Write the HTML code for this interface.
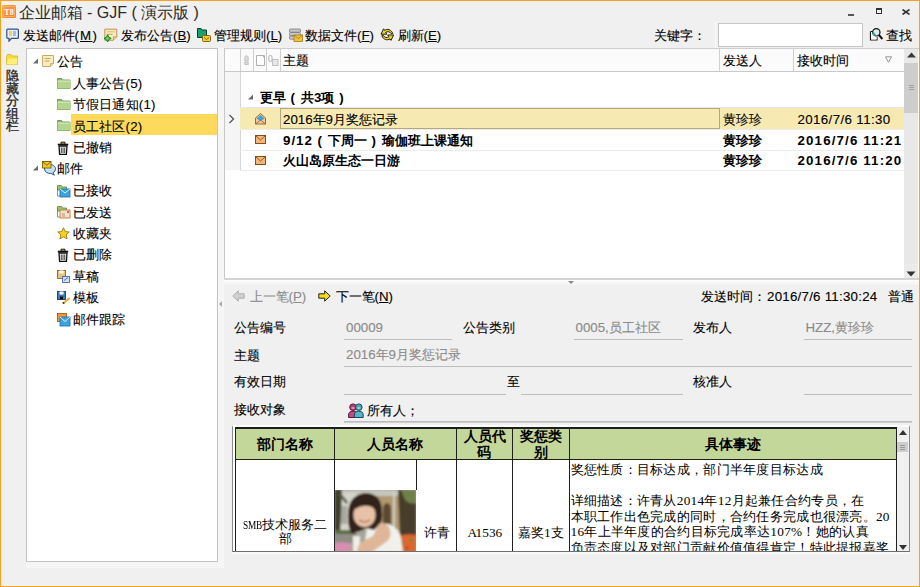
<!DOCTYPE html>
<html><head><meta charset="utf-8"><style>
*{box-sizing:border-box}
html,body{margin:0;padding:0;width:920px;height:587px;overflow:hidden;background:#f0f0f0;font-family:"Liberation Sans",sans-serif;color:#000}
.a{position:absolute;white-space:nowrap}
.t{position:absolute;white-space:nowrap;font-size:13.3px;line-height:16px;-webkit-text-stroke:.12px currentColor}
.u{text-decoration:underline;text-underline-offset:1px}
.b{font-weight:bold}
.sf{font-family:"Liberation Serif",serif}
</style></head><body>
<div class="a" style="left:0px;top:0px;width:920px;height:587px;border:1px solid #f4a31e"></div>
<svg class="a" style="left:2px;top:5px" width="14" height="13" viewBox="0 0 14 13"><defs><linearGradient id="og" x1="0" y1="0" x2="1" y2="1"><stop offset="0" stop-color="#ffa04a"/><stop offset="1" stop-color="#f5801e"/></linearGradient></defs><rect x="0" y="0" width="14" height="13" rx="1.5" fill="url(#og)"/><rect x="1.5" y="1.5" width="11" height="10" fill="none" stroke="#ffc080" stroke-width=".6"/><text x="7" y="10" font-size="8" font-family="Liberation Serif" font-weight="bold" fill="#fff" text-anchor="middle">T8</text></svg>
<div class="a" style="left:18.5px;top:3px;font-size:16px;line-height:19px;color:#2a2a2a">企业邮箱 - GJF ( 演示版 )</div>
<div class="a" style="left:848px;top:14px;width:6px;height:2px;background:#555"></div>
<div class="a" style="left:876px;top:8px;width:6px;height:6px;border:1px solid #333;border-top-width:2px"></div>
<svg class="a" style="left:902px;top:9px" width="8" height="6" viewBox="0 0 8 6"><path d="M0.5 0.5L7.5 5.5M7.5 0.5L0.5 5.5" stroke="#333" stroke-width="1.6"/></svg>
<svg class="a" style="left:5.5px;top:28px" width="14" height="14" viewBox="0 0 14 14"><path d="M1.8 1.2h9.6a1 1 0 0 1 1 1v7.2a1 1 0 0 1-1 1H5.5L3 13.2v-2.8H1.8a1 1 0 0 1-1-1V2.2a1 1 0 0 1 1-1z" fill="#e6eef8" stroke="#2f4f8a" stroke-width="1.2"/><rect x="3" y="3" width="3" height="5" fill="#e8d650"/><rect x="7" y="3" width="3" height="5" fill="#a9b9cf"/></svg>
<div class="t" style="left:22.5px;top:28px;">发送邮件<span style="letter-spacing:1px">(</span><span class="u" style="letter-spacing:1.5px">M</span>)</div>
<svg class="a" style="left:104px;top:28px" width="14" height="14" viewBox="0 0 14 14"><path d="M.8 1.2h12v7.6L9.3 12.3H.8z" fill="#fbeebc" stroke="#b8955a" stroke-width="1"/><path d="M9.3 12.3V8.8h3.5" fill="#e6cf98" stroke="#b8955a" stroke-width=".8"/><path d="M2.8 3.8h8" stroke="#f0b060" stroke-width="1"/><path d="M2.8 6.3h6" stroke="#a89878" stroke-width=".9"/><path d="M3.6 6.8l1.2 2.4 2.4 1.2-2.4 1.2-1.2 2.4-1.2-2.4-2.4-1.2 2.4-1.2z" fill="#5fd35f" stroke="#167a16" stroke-width="1"/></svg>
<div class="t" style="left:121px;top:28px;">发布公告(<span class="u">B</span>)</div>
<svg class="a" style="left:197px;top:28px" width="14" height="14" viewBox="0 0 14 14"><path d="M0.5 0.5h3.5l1 1.5h4.5v7.5h-9z" fill="#17a070" stroke="#0a3a2a" stroke-width="1"/><rect x="5.5" y="7.5" width="8" height="6" rx="1" fill="#f5d020" stroke="#7a5a10" stroke-width=".9"/><path d="M7 9.5l2.5 2 2.5-2" fill="none" stroke="#7a5a10" stroke-width=".9"/></svg>
<div class="t" style="left:214px;top:28px;">管理规则(<span class="u">L</span>)</div>
<svg class="a" style="left:289px;top:28px" width="14" height="14" viewBox="0 0 14 14"><rect x="0.5" y="1" width="11" height="3.2" rx="1" fill="#c8c8c8" stroke="#777" stroke-width=".8"/><rect x="0.5" y="4.5" width="11" height="3.2" rx="1" fill="#c8c8c8" stroke="#777" stroke-width=".8"/><rect x="0.5" y="8" width="11" height="3.2" rx="1" fill="#c8c8c8" stroke="#777" stroke-width=".8"/><rect x="5" y="7" width="8.5" height="6.5" fill="#f3c23a" stroke="#a27a16" stroke-width=".8"/><path d="M5 7l4.25 3.5 4.25-3.5" fill="none" stroke="#a27a16" stroke-width=".8"/></svg>
<div class="t" style="left:305px;top:28px;">数据文件(<span class="u">F</span>)</div>
<svg class="a" style="left:380px;top:27px" width="15" height="15" viewBox="0 0 15 15"><path d="M12.8 6.6C11.3 2.4 7.2 1.4 4.6 3.4L3.6 1.8 1 7.2h5.8L5.7 5.4C7.7 4.1 10.1 4.6 11.1 6.6z" fill="#f7d40a" stroke="#1e1e1e" stroke-width="1"/><path d="M1.8 8.6C3.3 12.8 7.4 13.8 10 11.8l1 1.6 2.6-5.4H7.8l1.1 1.8C6.9 11.1 4.5 10.6 3.5 8.6z" fill="#f7d40a" stroke="#1e1e1e" stroke-width="1"/></svg>
<div class="t" style="left:397.5px;top:28px;">刷新(<span class="u">E</span>)</div>
<div class="t" style="left:653.5px;top:28px;">关键字：</div>
<div class="a" style="left:715px;top:22px;width:1px;height:26px;background:#fafafa"></div>
<div class="a" style="left:718px;top:23px;width:145px;height:24px;background:#fff;border:1px solid #c6c6c6"></div>
<svg class="a" style="left:869px;top:27px" width="15" height="14" viewBox="0 0 15 14"><path d="M1.5 4.5h3v0M1.5 4.5v8.5h6.5v-3" fill="#fff" stroke="#1a1a1a" stroke-width="1.2"/><rect x="2.1" y="5.1" width="5.5" height="7.3" fill="#fff"/><circle cx="7.3" cy="5.3" r="3.7" fill="#dfeeed" stroke="#111" stroke-width="1.2"/><path d="M4.3 5.3a3 3 0 0 0 2.5 3" fill="none" stroke="#2fa79c" stroke-width="2"/><path d="M9.9 8l3.5 4" stroke="#111" stroke-width="1.9"/></svg>
<div class="t" style="left:886px;top:28px;">查找</div>
<svg class="a" style="left:6px;top:54px" width="12" height="11" viewBox="0 0 12 11"><path d="M0.5 2.5l1-2h3.5l1 1.5h5.5v8.5h-11z" fill="#f7dc3a" stroke="#d8b51a" stroke-width=".8"/><path d="M0.5 10.5l1.5-6h9.5l-0.5 6z" fill="#fff07a"/></svg>
<div class="a" style="left:5.5px;top:70px;font-size:13px;line-height:12.6px;width:14px;white-space:normal;color:#222;-webkit-text-stroke:.3px #222">隐藏分组栏</div>
<div class="a" style="left:26px;top:48px;width:192px;height:514px;background:#fff;border:1px solid #c3c3c3"></div>
<div class="a" style="left:71px;top:114px;width:146px;height:21px;background:#fdd95c"></div>
<svg class="a" style="left:33px;top:58px" width="5" height="6" viewBox="0 0 5 6"><path d="M5 0.5v5h-5z" fill="#6a6a6a"/></svg>
<svg class="a" style="left:42px;top:55px" width="12" height="12" viewBox="0 0 12 12"><path d="M0.5 0.5h11v8l-3 3h-8z" fill="#f8ecc0" stroke="#c7aa6a" stroke-width="1"/><path d="M2.5 3.5h6M2.5 6h5" stroke="#c9a860" stroke-width="1"/><path d="M8.5 11.5v-3h3" fill="#eedc9c" stroke="#c7aa6a" stroke-width=".8"/></svg>
<div class="t" style="left:57.3px;top:54px;">公告</div>
<svg class="a" style="left:57px;top:77px" width="14" height="12" viewBox="0 0 14 12"><path d="M0.5 1.5h4l1 1.5h7.5v8.5H0.5z" fill="#8fb86a" stroke="#5d8a3e" stroke-width=".8"/><path d="M0.5 4h13v7.5H0.5z" fill="#b5d48e"/><path d="M0.5 4h13" stroke="#e6f2d6" stroke-width="1"/></svg>
<div class="t" style="left:72.8px;top:76px;letter-spacing:.2px">人事公告(5)</div>
<svg class="a" style="left:57px;top:98px" width="14" height="12" viewBox="0 0 14 12"><path d="M0.5 1.5h4l1 1.5h7.5v8.5H0.5z" fill="#8fb86a" stroke="#5d8a3e" stroke-width=".8"/><path d="M0.5 4h13v7.5H0.5z" fill="#b5d48e"/><path d="M0.5 4h13" stroke="#e6f2d6" stroke-width="1"/></svg>
<div class="t" style="left:72.8px;top:97px;letter-spacing:.2px">节假日通知(1)</div>
<svg class="a" style="left:57px;top:119px" width="14" height="12" viewBox="0 0 14 12"><path d="M0.5 1.5h4l1 1.5h7.5v8.5H0.5z" fill="#8fb86a" stroke="#5d8a3e" stroke-width=".8"/><path d="M0.5 4h13v7.5H0.5z" fill="#b5d48e"/><path d="M0.5 4h13" stroke="#e6f2d6" stroke-width="1"/></svg>
<div class="t" style="left:72.8px;top:118.5px;letter-spacing:.2px">员工社区(2)</div>
<svg class="a" style="left:57px;top:141px" width="12" height="14" viewBox="0 0 12 14"><path d="M4 3.2V1.2h4v2" fill="#c9a040" stroke="#222" stroke-width="1"/><path d="M.8 3.6h10.4" stroke="#111" stroke-width="1.8"/><path d="M2 5h8l-.6 8.3H2.6z" fill="#f4f4f4" stroke="#111" stroke-width="1.3"/><path d="M4.3 6.5v5.5M6 6.5v5.5M7.7 6.5v5.5" stroke="#333" stroke-width=".9"/></svg>
<div class="t" style="left:72.8px;top:140px;letter-spacing:.2px">已撤销</div>
<svg class="a" style="left:33px;top:165px" width="5" height="6" viewBox="0 0 5 6"><path d="M5 0.5v5h-5z" fill="#6a6a6a"/></svg>
<svg class="a" style="left:42px;top:161px" width="14" height="15" viewBox="0 0 14 15"><path d="M2.5 8a5.5 4.5 0 1 1 8.5 3.7l1.3 2.5-3.4-1.8A5.5 4.5 0 0 1 2.5 8z" fill="#c2e0f2" stroke="#2a5a7a" stroke-width="1"/><rect x=".5" y=".5" width="8.5" height="6.5" fill="#f2c81a" stroke="#7a5a10" stroke-width=".9"/><path d="M.8 .8l4 3.5 4-3.5" fill="none" stroke="#7a5a10" stroke-width=".9"/></svg>
<div class="t" style="left:57.3px;top:161px;">邮件</div>
<svg class="a" style="left:57px;top:184px" width="14" height="14" viewBox="0 0 14 14"><path d="M0.5 1.5h4l1 1.5h4v3H0.5z" fill="#9cc46f" stroke="#5d8a3e" stroke-width=".8"/><path d="M0.5 3v9h3" fill="none" stroke="#5d8a3e" stroke-width=".8"/><rect x="3" y="5" width="10" height="8" fill="#3ba3e0" stroke="#1a6aa8" stroke-width=".8"/><path d="M3 5l5 4 5-4" fill="none" stroke="#dff1fb" stroke-width="1"/></svg>
<div class="t" style="left:72.8px;top:183px;letter-spacing:.2px">已接收</div>
<svg class="a" style="left:57px;top:205px" width="14" height="14" viewBox="0 0 14 14"><path d="M0.5 1.5h4l1 1.5h4v3H0.5z" fill="#9cc46f" stroke="#5d8a3e" stroke-width=".8"/><path d="M0.5 3v9h3" fill="none" stroke="#5d8a3e" stroke-width=".8"/><rect x="3" y="5" width="10" height="8" fill="#f3e2cf" stroke="#c0773a" stroke-width=".9"/><path d="M5 9h3M5 11h3" stroke="#c0773a" stroke-width=".8"/><circle cx="11" cy="7" r="1" fill="#e03050"/></svg>
<div class="t" style="left:72.8px;top:204.5px;letter-spacing:.2px">已发送</div>
<svg class="a" style="left:57px;top:227px" width="13" height="13" viewBox="0 0 13 13"><path d="M6.5 0.8l1.7 3.8 4.1.4-3.1 2.8.9 4.1-3.6-2.1-3.6 2.1.9-4.1L.7 5l4.1-.4z" fill="#f7d21e" stroke="#9a7a10" stroke-width=".9"/></svg>
<div class="t" style="left:72.8px;top:226px;letter-spacing:.2px">收藏夹</div>
<svg class="a" style="left:57px;top:248px" width="12" height="14" viewBox="0 0 12 14"><path d="M4 3.2V1.2h4v2" fill="#c9a040" stroke="#222" stroke-width="1"/><path d="M.8 3.6h10.4" stroke="#111" stroke-width="1.8"/><path d="M2 5h8l-.6 8.3H2.6z" fill="#f4f4f4" stroke="#111" stroke-width="1.3"/><path d="M4.3 6.5v5.5M6 6.5v5.5M7.7 6.5v5.5" stroke="#333" stroke-width=".9"/></svg>
<div class="t" style="left:72.8px;top:247px;letter-spacing:.2px">已删除</div>
<svg class="a" style="left:57px;top:270px" width="13" height="13" viewBox="0 0 13 13"><rect x="0.5" y="0.5" width="8" height="8" fill="#e8c477" stroke="#8a6a2a" stroke-width=".9"/><rect x="2.5" y="0.5" width="4" height="3" fill="#fff"/><rect x="5.5" y="6.5" width="7" height="6" fill="#cfe0f5" stroke="#4a6ab0" stroke-width=".9"/><path d="M7 10.5l4-3" stroke="#4a6ab0" stroke-width=".9"/></svg>
<div class="t" style="left:72.8px;top:269px;letter-spacing:.2px">草稿</div>
<svg class="a" style="left:57px;top:291px" width="13" height="13" viewBox="0 0 13 13"><rect x="0.5" y="0.5" width="8" height="8" fill="#3a78c0" stroke="#1a3a70" stroke-width=".9"/><rect x="2.5" y="0.5" width="4" height="3" fill="#fff"/><rect x="3" y="5.5" width="3" height="3" fill="#111"/><path d="M6 12.5l6.5-5.5" stroke="#e0b030" stroke-width="2"/><path d="M6 12.5l1-1" stroke="#333" stroke-width="2"/></svg>
<div class="t" style="left:72.8px;top:290px;letter-spacing:.2px">模板</div>
<svg class="a" style="left:57px;top:313px" width="14" height="14" viewBox="0 0 14 14"><rect x="0.5" y="0.5" width="9" height="8" fill="#f09a3a" stroke="#a8581a" stroke-width=".9"/><rect x="3" y="4" width="10" height="9" fill="#3ba3e0" stroke="#1a6aa8" stroke-width=".8"/><path d="M3 4l5 4.5 5-4.5" fill="none" stroke="#dff1fb" stroke-width="1"/></svg>
<div class="t" style="left:72.8px;top:312px;letter-spacing:.2px">邮件跟踪</div>
<div class="a" style="left:218px;top:48px;width:6px;height:520px;background:#f6f6f6"></div>
<div class="a" style="left:26px;top:562px;width:192px;height:6px;background:#f5f5f5"></div>
<div class="a" style="left:224px;top:48px;width:695px;height:231px;background:#fff;border-left:1px solid #c8c8c8;border-top:1px solid #cfcfcf"></div>
<div class="a" style="left:224px;top:278px;width:695px;height:2px;background:#d4d4d4"></div>
<div class="a" style="left:225px;top:49px;width:679px;height:23px;background:#fbfbfb;border-bottom:1px solid #c8c8c8"></div>
<div class="a" style="left:240px;top:49px;width:1px;height:22px;background:#d0d0d0"></div>
<div class="a" style="left:253px;top:49px;width:1px;height:22px;background:#d0d0d0"></div>
<div class="a" style="left:266px;top:49px;width:1px;height:22px;background:#d0d0d0"></div>
<div class="a" style="left:280px;top:49px;width:1px;height:22px;background:#d0d0d0"></div>
<div class="a" style="left:719px;top:49px;width:1px;height:22px;background:#d0d0d0"></div>
<div class="a" style="left:793px;top:49px;width:1px;height:22px;background:#d0d0d0"></div>
<div class="a" style="left:225px;top:72px;width:16px;height:98px;background:#f5f5f5;border-right:1px solid #d6d6d6"></div>
<svg class="a" style="left:244px;top:55px" width="5" height="10" viewBox="0 0 5 10"><path d="M.8 2.5a1.7 1.7 0 0 1 3.4 0v3.5h-3.4z" fill="#ddd" stroke="#b8b8b8" stroke-width=".8"/><rect x=".8" y="7.2" width="3.4" height="2.3" fill="#ddd" stroke="#b8b8b8" stroke-width=".8"/></svg>
<svg class="a" style="left:256px;top:55px" width="10" height="11" viewBox="0 0 10 11"><path d="M.5 .5h8v10h-8z" fill="#fff" stroke="#b0b0b0"/><path d="M7 1.5h1v1" stroke="#999" stroke-width=".8" fill="none"/></svg>
<svg class="a" style="left:268px;top:55px" width="11" height="11" viewBox="0 0 11 11"><path d="M.8 4V2a1.6 1.6 0 0 1 3.2 0v3a1.6 1.6 0 0 1-3.2 0z" fill="none" stroke="#aaa" stroke-width=".9"/><rect x="4.5" y="4.5" width="5.5" height="6" fill="#e8e8e8" stroke="#bbb" stroke-width=".9"/></svg>
<div class="t" style="left:283px;top:53px;">主题</div>
<div class="t" style="left:723px;top:53px;">发送人</div>
<div class="t" style="left:797px;top:53px;">接收时间</div>
<svg class="a" style="left:885px;top:56px" width="7" height="7" viewBox="0 0 7 7"><path d="M.5 .8h6l-3 5.5z" fill="none" stroke="#8a8a8a" stroke-width=".9"/></svg>
<div class="a" style="left:904px;top:49px;width:14px;height:229px;background:#e8e8e8"></div>
<div class="a" style="left:904px;top:264px;width:14px;height:14px;background:#ebebeb"></div>
<svg class="a" style="left:907px;top:52px" width="9" height="6" viewBox="0 0 9 6"><path d="M0 5.5l4.5-5 4.5 5z" fill="#3a3a3a"/></svg>
<div class="a" style="left:904px;top:63px;width:14px;height:50px;background:#cdcdcd"></div>
<div class="a" style="left:909px;top:85px;width:5px;height:1px;background:#a0a0a0"></div>
<div class="a" style="left:909px;top:87px;width:5px;height:1px;background:#a0a0a0"></div>
<div class="a" style="left:909px;top:89px;width:5px;height:1px;background:#a0a0a0"></div>
<svg class="a" style="left:906px;top:271px" width="10" height="6" viewBox="0 0 10 6"><path d="M0.5 0.5h9l-4.5 5z" fill="#333"/></svg>
<svg class="a" style="left:248px;top:94px" width="5" height="6" viewBox="0 0 5 6"><path d="M5 0.5v5h-5z" fill="#6a6a6a"/></svg>
<div class="t" style="left:259.5px;top:90px;font-weight:bold;-webkit-text-stroke:0">更早<span style="letter-spacing:1.2px"> ( </span>共3项<span style="letter-spacing:1.2px"> )</span></div>
<div class="a" style="left:240px;top:107px;width:664px;height:1px;background:#e6e6f0"></div>
<div class="a" style="left:240px;top:108px;width:664px;height:21px;background:#f7e9b2"></div>
<div class="a" style="left:280px;top:108px;width:440px;height:21px;border:1px solid #b3a77c"></div>
<div class="a" style="left:240px;top:129px;width:664px;height:1px;background:#ececec"></div>
<div class="a" style="left:240px;top:150px;width:664px;height:1px;background:#ececec"></div>
<div class="a" style="left:240px;top:170px;width:664px;height:1px;background:#ececec"></div>
<svg class="a" style="left:228px;top:114px" width="7" height="10" viewBox="0 0 7 10"><path d="M1.5 1l4 4-4 4" fill="none" stroke="#555" stroke-width="1.3"/></svg>
<svg class="a" style="left:255px;top:113px" width="11" height="12" viewBox="0 0 11 12"><path d="M.5 5l5-4.5 5 4.5v6h-10z" fill="#f3c89a" stroke="#9a5a2a" stroke-width=".9"/><path d="M1.5 5.5l4-3.5 4 3.5-4 2.5z" fill="#3aa6d8"/><path d="M.5 11l5-4 5 4" fill="none" stroke="#9a5a2a" stroke-width=".8"/></svg>
<svg class="a" style="left:255px;top:135px" width="11" height="9" viewBox="0 0 11 9"><rect x=".5" y=".5" width="10" height="8" fill="#f2b878" stroke="#8a4a1a" stroke-width="1"/><path d="M.8 .8l4.7 4.2 4.7-4.2" fill="none" stroke="#8a4a1a" stroke-width=".9"/></svg>
<svg class="a" style="left:255px;top:156px" width="11" height="9" viewBox="0 0 11 9"><rect x=".5" y=".5" width="10" height="8" fill="#f2b878" stroke="#8a4a1a" stroke-width="1"/><path d="M.8 .8l4.7 4.2 4.7-4.2" fill="none" stroke="#8a4a1a" stroke-width=".9"/></svg>
<div class="t" style="left:283px;top:111.5px;">2016年9月奖惩记录</div>
<div class="t" style="left:723px;top:111.5px;">黄珍珍</div>
<div class="t" style="left:797.5px;top:111.5px;letter-spacing:.38px">2016/7/6 11:30</div>
<div class="t" style="left:283px;top:132.5px;font-weight:bold;-webkit-text-stroke:0"><span style="letter-spacing:1px">9/12 ( </span>下周一<span style="letter-spacing:1px"> ) </span>瑜伽班上课通知</div>
<div class="t" style="left:723px;top:132.5px;font-weight:bold;-webkit-text-stroke:0">黄珍珍</div>
<div class="t" style="left:797.5px;top:132.5px;font-weight:bold;letter-spacing:1.15px;-webkit-text-stroke:0">2016/7/6 11:21</div>
<div class="t" style="left:283px;top:153px;font-weight:bold;-webkit-text-stroke:0">火山岛原生态一日游</div>
<div class="t" style="left:723px;top:153px;font-weight:bold;-webkit-text-stroke:0">黄珍珍</div>
<div class="t" style="left:797.5px;top:153px;font-weight:bold;letter-spacing:1.15px;-webkit-text-stroke:0">2016/7/6 11:20</div>
<div class="a" style="left:224px;top:280px;width:695px;height:5px;background:linear-gradient(#fdfdfd,#f3f3f3)"></div>
<svg class="a" style="left:568px;top:281px" width="6" height="3" viewBox="0 0 6 3"><path d="M0 0h6l-3 3z" fill="#888"/></svg>
<svg class="a" style="left:219px;top:301px" width="3" height="6" viewBox="0 0 3 6"><path d="M3 0v6l-3-3z" fill="#aaa"/></svg>
<svg class="a" style="left:232px;top:290px" width="13" height="12" viewBox="0 0 13 12"><path d="M.8 6l5.5-5.2v3h5.9v4.4H6.3v3z" fill="#cfcfcf" stroke="#a8a8a8" stroke-width=".9"/></svg>
<div class="t" style="left:249.5px;top:289px;color:#8c8c8c">上一笔(<span class="u">P</span>)</div>
<svg class="a" style="left:318px;top:290px" width="13" height="12" viewBox="0 0 13 12"><path d="M12.2 6L6.7.8v3H.8v4.4h5.9v3z" fill="#f5dc10" stroke="#222" stroke-width="1"/></svg>
<div class="t" style="left:335.5px;top:289px;">下一笔(<span class="u">N</span>)</div>
<div class="t" style="left:701px;top:289px;">发送时间：</div>
<div class="t" style="left:767px;top:289px;letter-spacing:.25px">2016/7/6 11:30:24</div>
<div class="t" style="left:888px;top:289px;">普通</div>
<div class="t" style="left:233.5px;top:320px;">公告编号</div>
<div class="a" style="left:344px;top:339px;width:108px;height:1px;background:#bdbdbd"></div>
<div class="t" style="left:346px;top:320px;color:#8a8a8a">00009</div>
<div class="t" style="left:462.5px;top:320px;">公告类别</div>
<div class="a" style="left:573.5px;top:339px;width:109.0px;height:1px;background:#bdbdbd"></div>
<div class="t" style="left:575.5px;top:320px;color:#8a8a8a">0005,员工社区</div>
<div class="t" style="left:693px;top:320px;">发布人</div>
<div class="a" style="left:804px;top:339px;width:108px;height:1px;background:#bdbdbd"></div>
<div class="t" style="left:805.5px;top:320px;color:#8a8a8a">HZZ,黄珍珍</div>
<div class="t" style="left:233.5px;top:347.5px;">主题</div>
<div class="a" style="left:344px;top:366px;width:568px;height:1px;background:#bdbdbd"></div>
<div class="t" style="left:346px;top:347px;color:#8a8a8a">2016年9月奖惩记录</div>
<div class="t" style="left:233.5px;top:374px;">有效日期</div>
<div class="a" style="left:344px;top:394px;width:162px;height:1px;background:#bdbdbd"></div>
<div class="t" style="left:507px;top:374px;">至</div>
<div class="a" style="left:520.5px;top:394px;width:162.0px;height:1px;background:#bdbdbd"></div>
<div class="t" style="left:693px;top:374px;">核准人</div>
<div class="a" style="left:804px;top:394px;width:108px;height:1px;background:#bdbdbd"></div>
<div class="t" style="left:233.5px;top:401.5px;">接收对象</div>
<div class="a" style="left:344px;top:421px;width:568px;height:1px;background:#bdbdbd"></div>
<div class="a" style="left:344px;top:422px;width:568px;height:1px;background:#cfcfcf"></div>
<svg class="a" style="left:348px;top:403px" width="16" height="16" viewBox="0 0 16 16"><circle cx="5" cy="4.2" r="3.3" fill="#b8407a" stroke="#5a1a3a" stroke-width="1"/><path d="M.6 14.5v-2.5a4.4 3.8 0 0 1 8.8 0v2.5z" fill="#c24a86" stroke="#5a1a3a" stroke-width="1"/><circle cx="10.8" cy="4.2" r="3.3" fill="#4aa8b8" stroke="#1a4a5a" stroke-width="1"/><path d="M6.4 14.5v-2.5a4.4 3.8 0 0 1 8.8 0v2.5z" fill="#56b4c4" stroke="#1a4a5a" stroke-width="1"/><path d="M3.5 5h3M9.3 5h3" stroke="#f0e0e8" stroke-width="1"/></svg>
<div class="t" style="left:367px;top:403px;">所有人；</div>
<div class="a" style="left:232px;top:425px;width:678px;height:127px;background:#fff;border:1px solid #8a8a8a;border-bottom-color:#6e6e6e;border-top:2px solid #fcfcfc"></div>
<div class="a" style="left:232px;top:552px;width:678px;height:2px;background:#f9f9f9"></div>
<div class="a" style="left:234px;top:427px;width:663px;height:124px;overflow:hidden">
<div class="a" style="left:1px;top:1px;width:662px;height:32px;background:#c4d79b"></div>
<div class="a" style="left:1px;top:33px;width:662px;height:100px;background:#fff"></div>
<svg class="a" style="left:101px;top:63px" width="81" height="62" viewBox="0 0 81 62"><defs><filter id="bl" x="0" y="0" width="81" height="62" filterUnits="userSpaceOnUse"><feGaussianBlur stdDeviation="0.8"/></filter></defs><rect width="81" height="62" fill="#a8a698"/><g filter="url(#bl)"><rect x="0" y="0" width="81" height="10" fill="#c6c6be"/><rect x="2" y="3" width="20" height="40" fill="#d4d4cc"/><rect x="6" y="16" width="6" height="18" fill="#a8a8a0"/><path d="M0 0h7l-2 46H0z" fill="#3e3c2c"/><path d="M5 2l8 10-2 2-7-9z" fill="#5a5a48"/><rect x="38" y="6" width="27" height="40" fill="#b09870"/><path d="M48 44V19a4 6 0 0 1 8 0v25z" fill="#5c4a32"/><rect x="58" y="2" width="2" height="44" fill="#d0d0c6"/><path d="M63 0h18v47H65z" fill="#463c2a"/><path d="M66 0h15v13q-6 2-11-3z" fill="#70804a"/><rect x="0" y="40" width="21" height="4" fill="#5e6c44"/><rect x="0" y="44" width="22" height="9" fill="#8e8e86"/><path d="M60 47q10-4 21-2v17H62z" fill="#dc682e"/><circle cx="67" cy="53" r="1.8" fill="#5a8a3a"/><circle cx="76" cy="50" r="1.5" fill="#5a8a3a"/><circle cx="72" cy="58" r="1.5" fill="#c83a22"/><path d="M0 53q8-2 16 1v8H0z" fill="#d88eae"/><path d="M32 38q10-6 22-4q10 4 12 14l2 14H28z" fill="#f2f0ec"/><path d="M18 46h7v16h-7z" fill="#f0eee8"/><path d="M13 28q-1-23 17-25q17 0 17 19q1 8-2 12l-6 6-8-2-14 6q-4-6-4-16z" fill="#33231a"/><ellipse cx="29.5" cy="25" rx="11" ry="12" fill="#e8c2a6"/><path d="M19 17q9-9 21-3l-1 4q-9-5-19 1z" fill="#33231a"/><path d="M24 30q5.5 4 11 0" stroke="#9a5040" stroke-width="1.1" fill="none"/><path d="M44 34q9-2 11 6q2 8-4 12l-14 10H22q0-8 8-12l8-4z" fill="#dfb698"/></g></svg>
<div class="a" style="left:1px;top:0px;width:662px;height:2px;background:#1f1f1f"></div>
<div class="a" style="left:1px;top:32px;width:662px;height:1px;background:#1f1f1f"></div>
<div class="a" style="left:1px;top:0px;width:1px;height:125px;background:#1f1f1f"></div>
<div class="a" style="left:100px;top:0px;width:1px;height:125px;background:#1f1f1f"></div>
<div class="a" style="left:222px;top:0px;width:1px;height:125px;background:#1f1f1f"></div>
<div class="a" style="left:278px;top:0px;width:1px;height:125px;background:#1f1f1f"></div>
<div class="a" style="left:335px;top:0px;width:1px;height:125px;background:#1f1f1f"></div>
<div class="a" style="left:182px;top:33px;width:1px;height:30px;background:#1f1f1f"></div>
<div class="a" style="left:101px;top:62px;width:81px;height:1px;background:#fff"></div>
<div class="a" style="left:662px;top:0px;width:1px;height:125px;background:#1f1f1f"></div>
<div class="a sf" style="left:22.5px;top:9px;font-size:13.3px;line-height:16px;font-weight:bold;font-size:14.3px">部门名称</div>
<div class="a sf" style="left:132.5px;top:9px;font-size:13.3px;line-height:16px;font-weight:bold;font-size:14.3px">人员名称</div>
<div class="a sf" style="left:230px;top:0.6000000000000227px;font-size:13.3px;line-height:16px;font-weight:bold;font-size:14.3px">人员代</div>
<div class="a sf" style="left:243px;top:16.600000000000023px;font-size:13.3px;line-height:16px;font-weight:bold;font-size:14.3px">码</div>
<div class="a sf" style="left:286.29999999999995px;top:0.6000000000000227px;font-size:13.3px;line-height:16px;font-weight:bold;font-size:14.3px">奖惩类</div>
<div class="a sf" style="left:299.5px;top:16.600000000000023px;font-size:13.3px;line-height:16px;font-weight:bold;font-size:14.3px">别</div>
<div class="a sf" style="left:471px;top:9px;font-size:13.3px;line-height:16px;font-weight:bold;font-size:14.3px">具体事迹</div>
<div class="a sf" style="left:8.5px;top:89.5px;font-size:13.3px;line-height:16px;"><span style="display:inline-block;transform:scaleX(.7);transform-origin:0 0;width:19.5px;letter-spacing:-.3px">SMB</span>技术服务二</div>
<div class="a sf" style="left:44.5px;top:103.5px;font-size:13.3px;line-height:16px;">部</div>
<div class="a sf" style="left:189.5px;top:97.5px;font-size:13.3px;line-height:16px;">许青</div>
<div class="a sf" style="left:233.5px;top:98px;font-size:13.3px;line-height:16px;"><span style="letter-spacing:-1.5px">A</span>1536</div>
<div class="a sf" style="left:284px;top:97.5px;font-size:13.3px;line-height:16px;">嘉奖1支</div>
<div class="a sf" style="left:336.5px;top:35.0px;font-size:13.3px;line-height:16px;letter-spacing:.28px">奖惩性质：目标达成，部门半年度目标达成</div>
<div class="a sf" style="left:336.5px;top:66.0px;font-size:13.3px;line-height:16px;letter-spacing:.28px">详细描述：许青从2014年12月起兼任合约专员，在</div>
<div class="a sf" style="left:336.5px;top:81.5px;font-size:13.3px;line-height:16px;letter-spacing:.28px">本职工作出色完成的同时，合约任务完成也很漂亮。20</div>
<div class="a sf" style="left:336.5px;top:97.0px;font-size:13.3px;line-height:16px;letter-spacing:.28px">16年上半年度的合约目标完成率达107%！她的认真</div>
<div class="a sf" style="left:336.5px;top:112.5px;font-size:13.3px;line-height:16px;letter-spacing:.28px">负责态度以及对部门贡献价值值得肯定！特此提报嘉奖</div>
</div>
<div class="a" style="left:897px;top:427px;width:12px;height:124px;background:#f0f0f0"></div>
<svg class="a" style="left:899px;top:430px" width="8" height="5" viewBox="0 0 8 5"><path d="M0 5l4-5 4 5z" fill="#333"/></svg>
<div class="a" style="left:897px;top:442px;width:11px;height:10px;background:#cdcdcd"></div>
<div class="a" style="left:900px;top:445px;width:5px;height:1px;background:#999"></div>
<div class="a" style="left:900px;top:447px;width:5px;height:1px;background:#999"></div>
<div class="a" style="left:900px;top:449px;width:5px;height:1px;background:#999"></div>
<svg class="a" style="left:899px;top:544.5px" width="8" height="5" viewBox="0 0 8 5"><path d="M0 0h8l-4 5z" fill="#333"/></svg>
</body></html>
